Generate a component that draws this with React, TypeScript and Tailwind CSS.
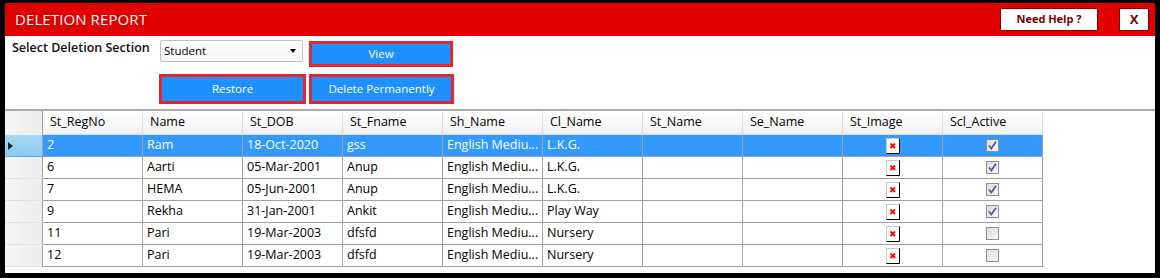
const rows = [
  { reg: "2", name: "Ram", dob: "18-Oct-2020", fname: "gss", cl: "L.K.G.", active: true },
  { reg: "6", name: "Aarti", dob: "05-Mar-2001", fname: "Anup", cl: "L.K.G.", active: true },
  { reg: "7", name: "HEMA", dob: "05-Jun-2001", fname: "Anup", cl: "L.K.G.", active: true },
  { reg: "9", name: "Rekha", dob: "31-Jan-2001", fname: "Ankit", cl: "Play Way", active: true },
  { reg: "11", name: "Pari", dob: "19-Mar-2003", fname: "dfsfd", cl: "Nursery", active: false },
  { reg: "12", name: "Pari", dob: "19-Mar-2003", fname: "dfsfd", cl: "Nursery", active: false },
];

const headers = ["St_RegNo", "Name", "St_DOB", "St_Fname", "Sh_Name", "Cl_Name", "St_Name", "Se_Name", "St_Image", "Scl_Active"];

const BrokenImage = () => (
  <svg width="14" height="16" viewBox="0 0 14 16">
    <rect x="0.5" y="0.5" width="13" height="15" fill="#fff" stroke="#c8c8c8" />
    <path d="M13.5 0.5 V15.5 H0.5" fill="none" stroke="#000" />
    <path d="M4.5 5.5 L9 10 M9 5.5 L4.5 10" stroke="#ff0000" strokeWidth="1.8" />
  </svg>
);

const Check = ({ on }: { on: boolean }) => (
  <svg width="13" height="13" viewBox="0 0 13 13">
    <defs>
      <linearGradient id="cbg" x1="0" y1="0" x2="1" y2="1">
        <stop offset="0" stopColor="#dcdcdc" />
        <stop offset="1" stopColor="#f8f8f8" />
      </linearGradient>
    </defs>
    <rect x="0.5" y="0.5" width="12" height="12" fill="url(#cbg)" stroke="#8e8f8f" />
    {on && <path d="M3 6.5 L5.3 9.5 L10 2.8" fill="none" stroke="#4d5d9a" strokeWidth="1.8" />}
  </svg>
);

export default function App() {
  return (
    <div className="w-[1160px] h-[278px] bg-black pt-[3px] px-[5px] pb-[5px] font-['Open_Sans',sans-serif]">
      <div className="w-full h-full bg-white flex flex-col">
        {/* title bar */}
        <div className="h-[33px] bg-[#e00000] flex items-center pl-[10px] pr-[6px]">
          <span className="text-white text-[15px] tracking-[0.1px]">DELETION REPORT</span>
          <div className="ml-auto flex items-center gap-[21px]">
            <button className="w-[98px] h-[23px] bg-white border border-[#8b0000] text-[#7a0000] text-[11px] font-bold">Need Help ?</button>
            <button className="w-[30px] h-[23px] bg-white border border-[#8b0000] text-[#6a0000] text-[13px] font-bold">X</button>
          </div>
        </div>

        {/* controls */}
        <div className="h-[73px] pl-[7px] pt-[4px] flex">
          <div className="w-[147px] text-[12.5px] font-semibold text-[#111] leading-[16px]">Select Deletion Section</div>
          <div className="flex flex-col">
            <div className="flex items-start">
              <div className="ml-[1px] w-[143px] h-[22px] border border-[#c2c2c2] rounded-[2px] bg-gradient-to-b from-white to-[#f4f4f4] flex items-center pl-[3px] pr-[6px] text-[11.5px] text-black">
                Student
                <span className="ml-auto w-0 h-0 border-l-[3.5px] border-r-[3.5px] border-t-[4px] border-l-transparent border-r-transparent border-t-black" />
              </div>
              <button className="ml-[6px] mt-[1px] w-[144px] h-[26px] border-[3px] border-[#e52630] bg-[#1e90ff] text-white text-[11.5px]">View</button>
            </div>
            <div className="flex mt-[7px]">
              <button className="w-[147px] h-[30px] border-[3px] border-[#e52630] bg-[#1e90ff] text-white text-[11.5px]">Restore</button>
              <button className="ml-[3px] w-[145px] h-[30px] border-[3px] border-[#e52630] bg-[#1e90ff] text-white text-[11.5px]">Delete Permanently</button>
            </div>
          </div>
        </div>

        {/* grid */}
        <div className="border-t-2 border-[#ababab] flex-1 text-[12.5px] text-black">
          <div className="flex h-[24px]">
            <div className="w-[38px] bg-gradient-to-r from-[#f7f7f7] to-[#ececec] border-r border-[#a0a0a0]" />
            {headers.map((h) => (
              <div key={h} className="w-[100px] border-r border-b border-[#dcdcdc] bg-gradient-to-b from-white to-[#f1f1f1] pl-[7px] flex items-center">
                {h}
              </div>
            ))}
          </div>
          {rows.map((r, i) => {
            const sel = i === 0;
            const cell = `w-[100px] h-[22px] border-r border-b border-[#a0a0a0] flex items-center pl-[4px] whitespace-nowrap overflow-hidden ${sel ? "bg-[#3399ff] text-white" : "bg-white"}`;
            return (
              <div key={i} className="flex">
                {sel ? (
                  <div className="w-[38px] h-[22px] bg-gradient-to-b from-[#a8d8f5] to-[#8ccbf1] border-b border-[#5aa8d8] border-r border-r-[#a0a0a0] flex items-center pl-[3px]">
                    <span className="w-0 h-0 border-t-[4.5px] border-b-[4.5px] border-l-[5px] border-t-transparent border-b-transparent border-l-[#222]" />
                  </div>
                ) : (
                  <div className="w-[38px] h-[22px] bg-gradient-to-r from-[#f7f7f7] to-[#ececec] border-b border-[#e2e2e2] border-r border-r-[#a0a0a0]" />
                )}
                <div className={cell}>{r.reg}</div>
                <div className={cell}>{r.name}</div>
                <div className={cell}>{r.dob}</div>
                <div className={cell}>{r.fname}</div>
                <div className={cell}>English Mediu...</div>
                <div className={cell}>{r.cl}</div>
                <div className={cell}></div>
                <div className={cell}></div>
                <div className={`${cell} justify-center !pl-0`}>
                  <BrokenImage />
                </div>
                <div className={`${cell} justify-center !pl-0`}>
                  <Check on={r.active} />
                </div>
              </div>
            );
          })}
        </div>
      </div>
    </div>
  );
}
